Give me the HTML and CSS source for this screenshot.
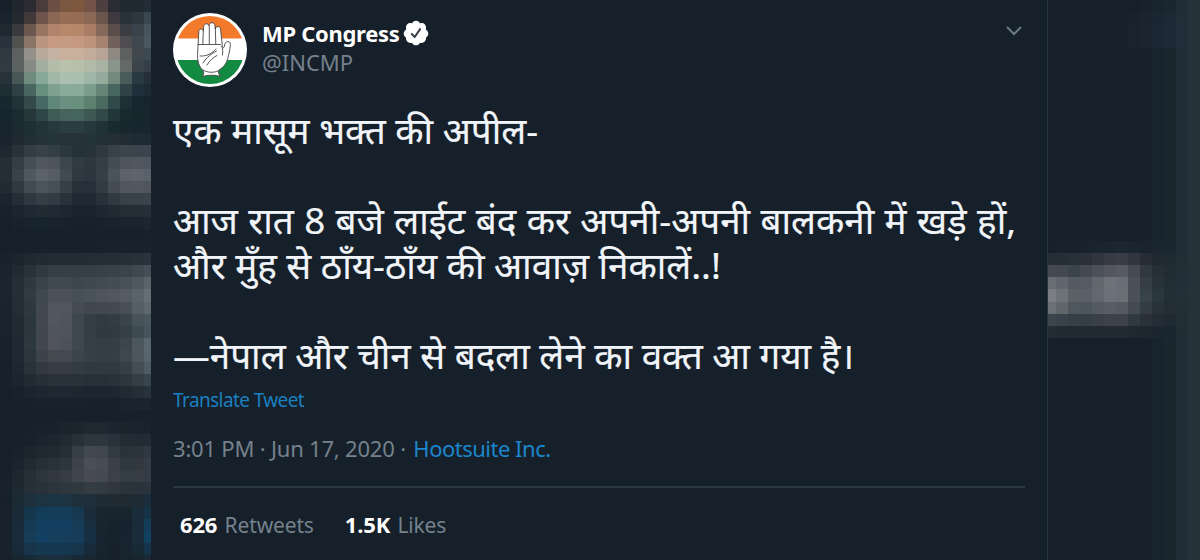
FILE: index.html
```html
<!DOCTYPE html>
<html lang="en">
<head>
    <meta charset="UTF-8">
    <meta name="viewport" content="width=device-width, initial-scale=1.0">
    <title>MP Congress</title>
    <link rel="stylesheet" href="styles.css">
</head>
<body>
    <div class="page">
        <svg class="mosaic mosaic-left" id="mosaic-left" width="151" height="560"></svg>

        <div class="tweet">
            <div class="header">
                <svg class="avatar" viewBox="0 0 74 74">
                    <defs>
                        <clipPath id="disc"><circle cx="37" cy="37" r="34"/></clipPath>
                    </defs>
                    <circle cx="37" cy="37" r="37" fill="#fff"/>
                    <g clip-path="url(#disc)">
                        <rect width="74" height="25.5" fill="#f47a2b"/>
                        <rect y="47" width="74" height="27" fill="#138a42"/>
                    </g>
                    <g fill="#fff" stroke="#47434a" stroke-width="0.9" stroke-linejoin="round" stroke-linecap="round">
                        <path d="M29.5 63.500c1.500-2 1.500-4 .5-6-4-4-5.500-9-5.500-15l1.300-24c.2-3 4-3.200 4.500-.5l.4-4.500c.3-3.500 5-3.500 5.300-.5 0-4.500 6-4.500 6 0l.3 3c.3-3.500 5-3.300 5.300.3l1.700 16c.6 3.500 2 3 2.300-.3.200-4 6-4.800 5.800-.7-.4 6-1.600 10-2.600 14-1.200 5.500-4.500 9-9 12-.8 2 0 4.500 1.700 6.200-5-1.800-13-1.800-18 0z"/>
                        <path d="M30.300 18l-.5 13M36.300 13.500V31M42.300 14.500l.5 16.500M25 31.500h22.500M48.500 33c2 3 1 6 1 9M27 43c7 .5 12-2.500 16-7M30 50c4-6 8-9 13.500-12M34 52c3-5 6-7.500 10-9.500M30 57c5 3 11 3 16 .5" fill="none"/>
                    </g>
                </svg>
                <div class="author">
                    <div class="name-row">
                        <span class="name">MP Congress</span>
                        <svg class="verified" viewBox="0 0 24 24">
                            <path fill="#fff" d="M22.5 12.5c0-1.58-.875-2.95-2.148-3.6.154-.435.238-.905.238-1.4 0-2.21-1.71-3.998-3.818-3.998-.47 0-.92.084-1.336.25C14.818 2.415 13.51 1.5 12 1.5s-2.816.917-3.437 2.25c-.415-.165-.866-.25-1.336-.25-2.11 0-3.818 1.79-3.818 4 0 .494.083.964.237 1.4-1.272.65-2.147 2.018-2.147 3.6 0 1.495.782 2.798 1.942 3.486-.02.17-.032.34-.032.514 0 2.21 1.708 4 3.818 4 .47 0 .92-.086 1.335-.25.62 1.334 1.926 2.25 3.437 2.25 1.512 0 2.818-.916 3.437-2.25.415.163.865.248 1.336.248 2.11 0 3.818-1.79 3.818-4 0-.174-.012-.344-.033-.513 1.158-.687 1.943-1.99 1.943-3.484z"/>
                            <path fill="none" stroke="#36404a" stroke-width="1.7" stroke-linecap="round" stroke-linejoin="round" d="M8.400 12.900l2.500 2.500 4.600-6.700"/>
                        </svg>
                    </div>
                    <div class="handle">@INCMP</div>
                </div>
                <svg class="chevron" viewBox="0 0 18 12">
                    <path d="M2 2l7 7 7-7"/>
                </svg>
            </div>

            <div class="text" lang="hi">
                <p class="line line-1">एक मासूम भक्त की अपील-</p>
                <p class="line line-2">आज रात 8 बजे लाईट बंद कर अपनी-अपनी बालकनी में खड़े हों,</p>
                <p class="line line-3">और मुँह से ठाँय-ठाँय की आवाज़ निकालें..!</p>
                <p class="line line-4">—नेपाल और चीन से बदला लेने का वक्त आ गया है।</p>
            </div>

            <div class="translate">Translate Tweet</div>
            <div class="meta">3:01 PM · Jun 17, 2020 · <span class="source">Hootsuite Inc.</span></div>

            <div class="stats">
                <div class="stat"><b>626</b> Retweets</div>
                <div class="stat"><b>1.5K</b> Likes</div>
            </div>
        </div>

        <svg class="mosaic mosaic-right" id="mosaic-right" width="152" height="560"></svg>
    </div>

    <script src="mosaic.js"></script>
</body>
</html>
```
FILE: mosaic.js
```js
const CELL_W = 12;
const CELL_H = 12.06;

// One line per row of cells, one colour per cell
const left = [
    '16202a 20262e 2c2b31 4a3c3b 6b4f45 7a573e 7d583f 735247 4d3f40 2b2c34 202831 202932 222d36',
    '1a242e 252a30 403839 6e544a 8c6854 976e54 966d54 8b6855 6b544c 3e393f 29313b 2d3740 3a464f',
    '1e2831 39393e 6a574d 987462 b1836a b8886b b7876b a97c65 84695b 5b4d49 3b3d42 38434b 48545d',
    '28323c 515150 8a7567 bb9580 c69b82 c69b83 c59981 be937c a78270 70625b 4e4c4e 3f4850 4b5760',
    '303942 5c605e 939189 b8aa9b c4b3a3 c8b09d c8b09c c3ab9a b7a497 8d8880 5e605f 40474d 3c4952',
    '303a43 5a625f 858b84 a1aea0 b2bea9 b9c1ac b8bfab b1baa8 a8b2a3 89948b 626966 3b444a 333e48',
    '28323b 485654 6f8b7f 88a999 a1b8a6 adbfae abbfae 9eb6a5 95aa9b 728a7e 4b5b59 2b3942 242f39',
    '1f2d34 2e4044 496760 668f80 7ea18f 8aab9a 8aaa9a 7b9d8c 668578 486660 304448 20303a 1c2a34',
    '182830 203337 33494a 476964 5e8779 6b9082 69907f 5d8070 4a695f 304a49 1c3035 18272f 17242d',
    '17262e 1b2b31 253739 2e4648 3e5b56 46645c 45645c 3e5952 314a48 21373a 18292f 17262d 17252d',
    '18242d 1b2931 1e2e35 22333a 26393f 293d42 293d42 25383d 203238 192a31 18272e 17262e 17252d',
    '1a242e 1e2932 222e36 243138 25333a 26333a 26333a 24323a 243037 232e36 212c35 1f2b34 1e2a33',
    '1f2831 29313a 343c45 38414a 343e46 2c3840 26323a 28323a 303942 38414a 3c444d 3b444d 3b454e',
    '242c35 343c45 454e57 50565f 4c535b 3d464f 303b44 2c3740 353d46 434b53 4e555e 50575f 4e565f',
    '252e37 39414a 4f5760 5c626a 565c65 414a53 2e3942 2c363f 363e47 4a525a 5b626a 5d646d 59616a',
    '212b34 303942 424b54 4b535b 464e56 353f48 253039 26303a 323a43 444b54 50575f 52585f 4e555d',
    '1c2630 252e37 2f3841 353e47 323b44 28323b 1f2933 202a34 28313a 303942 384149 39424a 39434c',
    '18222c 1b2630 1f2933 202b34 1f2a34 1c2731 1a242e 1a242e 1c2731 202a33 232d36 242e37 252f38',
    '16202a 17222c 18232d 18242d 18232d 18222c 17212b 17212b 17222c 18232d 19242e 1a242e 1d2730',
    '16202a 16202a 16212b 16212b 16212b 16212b 16212b 16212b 16212b 16212b 16212b 16212b 17222c',
    '16202a 16202a 17212b 17212b 17212b 17212b 17212b 17212b 17222c 17222c 17222c 17222c 18232d',
    '18222c 1a252e 1e2831 202b34 222c35 222c35 222c35 222d36 232d36 242e37 252f38 27313a 29333c',
    '1a242e 202a33 28323b 303841 353d46 363e47 363e48 363f48 38414a 39424b 3b444d 3f4851 464f58',
    '1b252f 242e37 2e3841 39414a 404851 404952 3c464f 3f4851 424b53 444d55 485058 4f575f 5a626a',
    '1b252f 242e37 303a42 3f474f 4a515a 4a5159 464f57 49515a 4e555d 50575f 545b63 5b636a 656e75',
    '1a242e 222d36 2e3841 424850 51565e 50565e 444b54 40474f 41484f 434951 484f57 555e66 5c676e',
    '19232d 212b34 2c363f 43474f 52565e 50545d 3e4750 353e46 303a42 333c44 39434b 46515a 4b575f',
    '18232d 202a33 2c363f 41474f 50545d 4f535c 3e474f 343e46 2e3941 303a42 353f47 3e4a52 48545b',
    '18222c 1f2933 2d373f 42474f 51545d 4d515a 3f474f 353f47 323d45 343e46 3c454c 4c565d 5a666d',
    '17222c 1f2933 2b353e 3b424b 44484f 454951 3c444c 354047 333e46 353f47 3d474f 4b565d 59656c',
    '17212b 1d2731 28323b 31383f 373c44 373d46 333b43 2f3941 2f3941 303a42 363f48 434d56 4f5b62',
    '16212b 1b252f 212b34 262f38 29323a 2a333c 28323b 253039 253039 28323b 2c363f 333e47 39454d',
    '16202a 18222c 1a252f 1c2731 1e2831 1e2832 1c2730 1b2630 1b2630 1c2731 1f2a33 232e37 27323b',
    '16202a 16212b 17212b 17222c 17222c 17222c 17222c 17212b 17212b 17212b 18232d 19242e 1a252f',
    '16202a 16202a 16202a 16212b 16212b 16212b 17212b 17212b 17212b 16212b 16212b 16212b 16212b',
    '16202a 16202a 17212b 17222c 18222c 19242d 1c262f 1d2831 1d2831 1b2630 19242d 19232d 18232d',
    '16202a 17212b 18222c 19242e 1b262f 202a33 28313a 2d363f 2d363f 29313a 222c34 222b34 222c35',
    '16202a 17222c 1a252e 1d2831 202a33 262f38 363e46 41484f 3f464e 313941 2a333b 2b343c 2e3840',
    '17212b 1a242e 202a33 262f37 29323a 2d363e 3d434b 4a4f57 464c54 3a4049 30383f 31393f 343d46',
    '17212b 1d2730 262f37 2c343c 31383f 363c44 40454d 484b54 454952 3b4049 343c44 353c44 343d45',
    '17222c 1e2831 273039 29323a 2b333c 2e363e 30383f 333b43 323a42 30373f 2b333b 2a333b 2a343c',
    '17212b 1b2932 1e303b 1c3341 1c3545 1d3443 1d303c 1f2e39 1f2b35 202b34 1f2a33 1e2b35 1b2e3b',
    '17222c 1a2a36 16364c 123d59 143d59 143d5a 163850 1a2c3a 19262f 18242e 18252f 192c39 153247',
    '17222d 192b39 153b54 123f60 143f60 153f60 163c58 182f41 18242e 16222c 16232e 182c3a 133c59',
    '17222d 182c3b 163c56 134062 163e5d 163e5c 153c59 172f42 17242f 16222c 17242f 182c3a 11405f',
    '17222c 18293a 18344a 17394f 153951 16384f 17354a 182b3a 17232d 16212b 17242e 182936 15344a',
    '16212b 18252f 192a37 1a2e3c 1b2f3e 1a2e3c 192a37 182631 17222c 16212b 17232d 18252f 192a36'
];

// Starts at the column holding the card's right edge
const rightPlain = '16202a 16202a 16202a 16202a 16202a 16202a 16202a 16202a 17212b 18242d 1a272f 202d36 25323a';
const rightRows = {
    0: '16202a 16202a 16202a 16202a 16202a 16202a 16202a 16202a 17222c 18242e 1a2731 202d36 25323a',
    1: '16202a 16202a 16202a 16202a 16202a 16202a 16212b 17222c 19242f 1a2631 1c2833 212d37 25323a',
    2: '16202a 16202a 16202a 16202a 16202a 16202a 17212b 18232d 1a2530 1b2733 1d2935 212d38 25323a',
    3: '16202a 16202a 16202a 16202a 16202a 16202a 17212b 18232d 1a2530 1b2733 1d2935 212d38 25323a',
    20: '17212b 17222c 17222c 18232d 1a242e 1a252f 1c2630 1a252f 19242e 1a252f 1b2730 202d36 25323a',
    21: '252e37 252e37 28313a 293039 30353e 373a44 393c45 31353e 252c35 202931 1f2b33 222e36 25323a',
    22: '444a51 434950 3b434b 424951 4c5058 54565f 575a62 464a52 303840 262f37 212c35 232f37 25323a',
    23: '686d73 60666d 535a61 555b62 62676e 6d7279 686e75 4c5159 353d45 28323a 222e36 232f38 25323a',
    24: '7b7f85 6d7279 5b6067 5a6067 636870 6c7078 6a6f76 4c5159 38424a 2a373e 222f37 243038 25323a',
    25: '6b7074 60666a 4e575e 4c555c 535a61 575e65 535a61 434a52 333b43 28323a 222d36 232f37 25323a',
    26: '3c444c 39424b 353f48 353e46 393f47 3b424a 3b424a 303840 2a313a 242c35 1f2a32 222e36 25323a',
    27: '222c34 222b34 202a33 202a33 212a33 222b34 222b34 1f2831 1d2730 1b2630 1b2730 202d35 25323a'
};
const right = [];
for (let row = 0; row < 47; row++) {
    right.push(rightRows[row] || rightPlain);
}

function drawMosaic(id, rows, offset) {
    const svg = document.getElementById(id);
    rows.forEach((line, row) => {
        line.split(' ').forEach((color, col) => {
            const rect = document.createElementNS('http://www.w3.org/2000/svg', 'rect');
            rect.setAttribute('x', col * CELL_W - offset);
            rect.setAttribute('y', Math.round(row * CELL_H));
            rect.setAttribute('width', CELL_W);
            rect.setAttribute('height', 13);
            rect.setAttribute('fill', '#' + color);
            svg.appendChild(rect);
        });
    });
}

drawMosaic('mosaic-left', left, 0);
drawMosaic('mosaic-right', right, 4);
```
FILE: styles.css
```css
body {
    margin: 0;
    background-color: #16202a;
    font-family: "Noto Sans", sans-serif;
    color: #fff;
    overflow: hidden;
}

.page {
    display: flex;
    width: 1200px;
    height: 560px;
}

.mosaic {
    display: block;
    flex: none;
}

.tweet {
    box-sizing: border-box;
    width: 897px;
    height: 560px;
    padding: 13px 22px 0;
    border-right: 1px solid #283640;
    background-color: #16202a;
}

.header {
    display: flex;
    height: 74px;
}

.avatar {
    width: 74px;
    height: 74px;
    margin-right: 15px;
}

.author {
    flex: 1;
    padding-top: 5px;
}

.name-row {
    display: flex;
    align-items: center;
    height: 30px;
}

.name {
    font-size: 22px;
    font-weight: 700;
    letter-spacing: -0.3px;
}

.verified {
    width: 28px;
    height: 28px;
    margin-left: 2px;
}

.handle {
    margin-top: -1px;
    font-size: 22px;
    line-height: 30px;
    color: #75818c;
}

.chevron {
    width: 18px;
    height: 12px;
    margin: 12px 2px 0 0;
    fill: none;
    stroke: #6c7983;
    stroke-width: 2;
}

.text {
    padding-top: 21px;
    color: #f1f5f9;
    -webkit-text-stroke: 0.2px #f1f5f9;
}

.line {
    margin: 0;
    height: 45px;
    font-size: 36.8px;
    line-height: 45px;
    white-space: nowrap;
}

.line-2,
.line-4 {
    margin-top: 45px;
}

.line-2 {
    word-spacing: 0.8px;
}

.translate {
    margin-top: 9px;
    font-size: 19px;
    line-height: 26px;
    letter-spacing: -0.6px;
    color: #1b7fbf;
}

.meta {
    margin-top: 20px;
    font-size: 22px;
    line-height: 30px;
    letter-spacing: -0.2px;
    color: #75818c;
}

.source {
    margin-left: 2px;
    letter-spacing: -0.5px;
    color: #1b86cc;
}

.stats {
    display: flex;
    gap: 31px;
    margin-top: 23px;
    padding: 21px 7px 0;
    border-top: 2px solid #2b3841;
    font-size: 21px;
    line-height: 30px;
    letter-spacing: -0.15px;
    color: #75818c;
}

.stat b {
    margin-right: 2px;
    font-size: 22px;
    color: #fff;
}
```
